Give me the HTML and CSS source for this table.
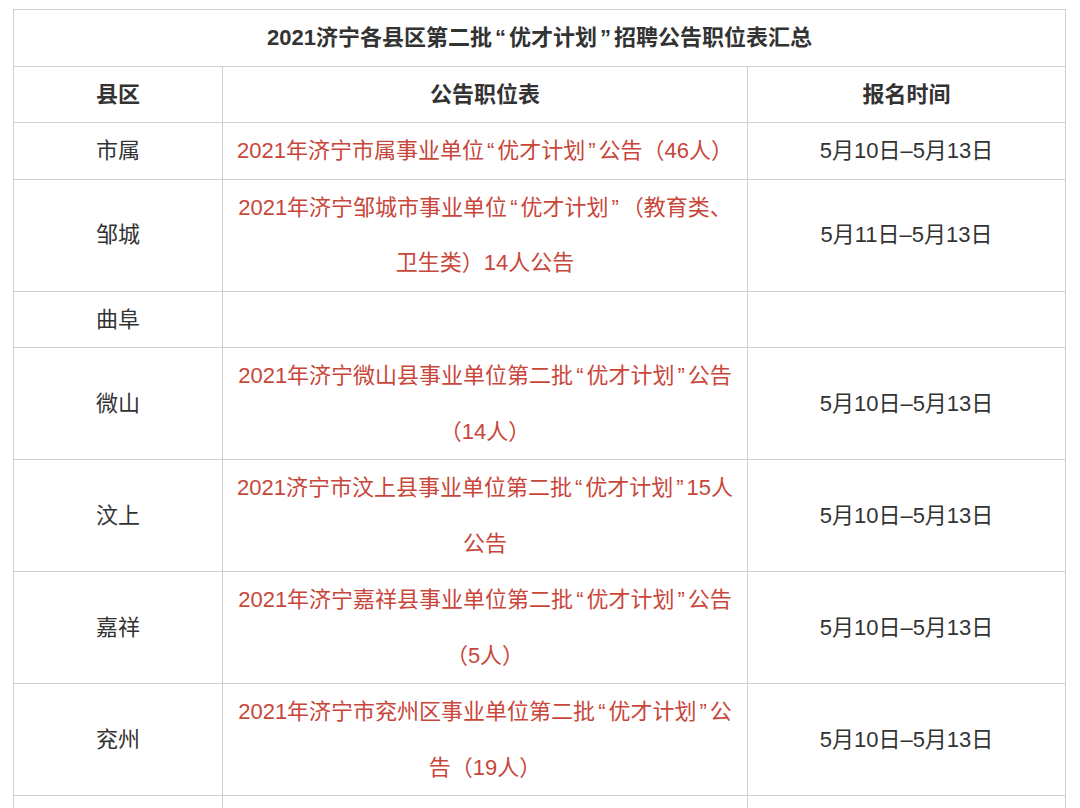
FILE: index.html
```html
<!DOCTYPE html>
<html lang="zh-CN">
<head>
<meta charset="utf-8">
<title>2021济宁各县区第二批“优才计划”招聘公告职位表汇总</title>
<link rel="stylesheet" href="styles.css">
</head>
<body>
<div class="page">
  <table class="summary">
    <colgroup>
      <col class="col-area">
      <col class="col-notice">
      <col class="col-time">
    </colgroup>
    <thead>
      <tr>
        <th class="title" colspan="3">2021济宁各县区第二批<span class="q">“</span>优才计划<span class="q">”</span>招聘公告职位表汇总</th>
      </tr>
      <tr>
        <th>县区</th>
        <th>公告职位表</th>
        <th>报名时间</th>
      </tr>
    </thead>
    <tbody>
      <tr>
        <td>市属</td>
        <td class="link">2021年济宁市属事业单位<span class="q">“</span>优才计划<span class="q">”</span>公告（46人）</td>
        <td>5月10日–5月13日</td>
      </tr>
      <tr>
        <td>邹城</td>
        <td class="link">2021年济宁邹城市事业单位<span class="q">“</span>优才计划<span class="q">”</span>（教育类、卫生类）14人公告</td>
        <td>5月11日–5月13日</td>
      </tr>
      <tr>
        <td>曲阜</td>
        <td class="link"></td>
        <td></td>
      </tr>
      <tr>
        <td>微山</td>
        <td class="link">2021年济宁微山县事业单位第二批<span class="q">“</span>优才计划<span class="q">”</span>公告（14人）</td>
        <td>5月10日–5月13日</td>
      </tr>
      <tr>
        <td>汶上</td>
        <td class="link">2021济宁市汶上县事业单位第二批<span class="q">“</span>优才计划<span class="q">”</span>15人公告</td>
        <td>5月10日–5月13日</td>
      </tr>
      <tr>
        <td>嘉祥</td>
        <td class="link">2021年济宁嘉祥县事业单位第二批<span class="q">“</span>优才计划<span class="q">”</span>公告（5人）</td>
        <td>5月10日–5月13日</td>
      </tr>
      <tr>
        <td>兖州</td>
        <td class="link">2021年济宁市兖州区事业单位第二批<span class="q">“</span>优才计划<span class="q">”</span>公告（19人）</td>
        <td>5月10日–5月13日</td>
      </tr>
      <tr>
        <td>&nbsp;</td>
        <td class="link">&nbsp;</td>
        <td>&nbsp;</td>
      </tr>
    </tbody>
  </table>
</div>
</body>
</html>
```

FILE: styles.css
```css
html, body {
  margin: 0;
  padding: 0;
  background: #ffffff;
}

body {
  font-family: "Liberation Sans", "Noto Sans CJK SC", sans-serif;
  color: #333333;
}

.page {
  padding: 9px 15px 0 13px;
}

.summary {
  width: 1052px;
  table-layout: fixed;
  border-collapse: collapse;
  font-size: 22px;
  line-height: 55.5px;
  text-spacing-trim: space-all;
}

.col-area { width: 209px; }
.col-notice { width: 525px; }
.col-time { width: 318px; }

.summary th,
.summary td {
  border: 1px solid #cfcfcf;
  padding: 0 12px;
  text-align: center;
  vertical-align: middle;
  font-weight: normal;
}

.summary th {
  font-weight: bold;
  color: #333333;
}

.summary td.link {
  color: #c8463a;
}

.q {
  padding: 0 3px;
}
```
